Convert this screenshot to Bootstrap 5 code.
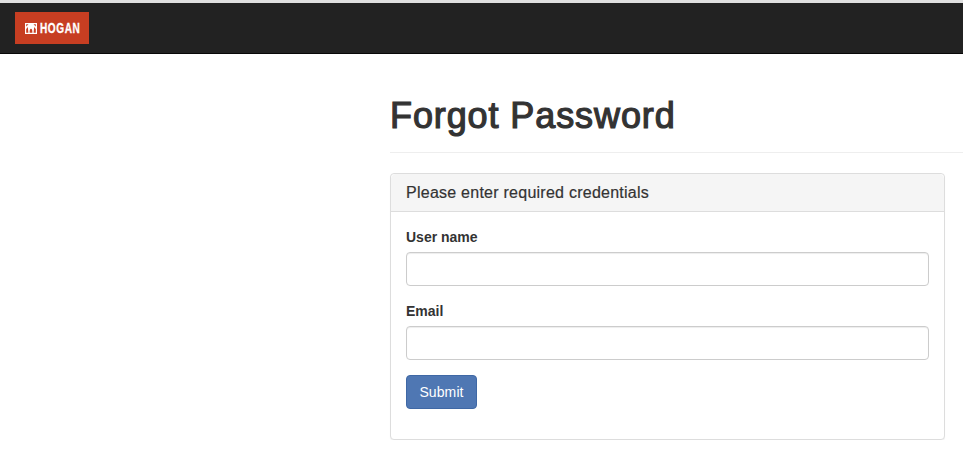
<!DOCTYPE html>
<html lang="en">
<head>
    <meta charset="UTF-8">
    <meta name="viewport" content="width=device-width, initial-scale=1.0">
    <title>Forgot Password</title>
    <link href="https://cdn.jsdelivr.net/npm/bootstrap@5.3.3/dist/css/bootstrap.min.css" rel="stylesheet">
    <style>
        body {
            font-family: "Liberation Sans", Arial, sans-serif;
            font-size: 14px;
            color: #333;
            background: #fff;
            overflow: hidden;
        }
        .top-bar {
            height: 54px;
            padding: 9px 15px 0;
            background: #222;
            border-top: 3px solid #e0e0e0;
            border-bottom: 1px solid #080808;
            align-items: flex-start;
        }
        .logo-box {
            width: 74px;
            height: 32px;
            background: #c73e22;
            gap: 3px;
            padding-left: 10px;
            overflow: hidden;
        }
        .logo-text {
            display: inline-block;
            color: #fff;
            font-weight: 700;
            font-size: 14px;
            letter-spacing: .8px;
            -webkit-text-stroke: .3px #fff;
            line-height: 1;
            transform: scaleX(.72);
            transform-origin: left center;
        }
        .page-wrap {
            margin-left: 390px;
        }
        .page-head {
            padding: 40px 0 15px;
            margin-bottom: 20px;
            border-bottom: 1px solid #eee;
        }
        .page-head h1 {
            font-size: 36px;
            font-weight: 400;
            letter-spacing: .9px;
            -webkit-text-stroke: 1.2px #333;
            line-height: 43px;
            margin: 0;
            color: #333;
        }
        .form-panel {
            width: 555px;
            height: 267px;
            border-color: #ddd;
            border-radius: 4px;
            box-shadow: 0 1px 1px rgba(0, 0, 0, .05);
        }
        .form-panel .card-header {
            height: 38px;
            padding: 10px 15px;
            font-size: 16px;
            letter-spacing: .25px;
            -webkit-text-stroke: .2px #333;
            line-height: 18px;
            color: #333;
            background: #f5f5f5;
            border-color: #ddd;
        }
        .form-panel .card-body {
            padding: 15px;
        }
        .form-panel .form-label {
            font-weight: 700;
            line-height: 20px;
            margin-bottom: 5px;
            color: #333;
        }
        .form-panel .form-control {
            height: 34px;
            border-color: #ccc;
            border-radius: 4px;
            box-shadow: inset 0 1px 1px rgba(0, 0, 0, .075);
        }
        .field-row {
            margin-bottom: 15px;
        }
        .submit-btn {
            width: 71px;
            height: 34px;
            padding: 6px 0;
            font-size: 14px;
            letter-spacing: .1px;
            line-height: 20px;
            color: #fff;
            background: #4f77b3;
            border: 1px solid #3f68a5;
            border-radius: 4px;
        }
    </style>
</head>
<body>
    <nav class="top-bar d-flex">
        <a class="logo-box d-flex align-items-center text-decoration-none" href="#">
            <svg class="flex-shrink-0" width="12" height="11" viewBox="0 0 12 11" aria-hidden="true">
                <path fill="#fff" d="M0 0h12v11H0z"/>
                <path fill="#c73e22" d="M1.200 1.200h2.300L1.200 3.600zM10.800 1.200H8.500l2.300 2.400zM1.200 6c.7-.6 1.300-1.400 1.600-2.200L3.400 9.800H1.200zM10.800 6c-.7-.6-1.300-1.400-1.600-2.200L8.600 9.800h2.200zM4.600 9.800c0-2.400.5-4 1.400-4s1.400 1.600 1.400 4z"/>
            </svg>
            <span class="logo-text flex-shrink-0">HOGAN</span>
        </a>
    </nav>
    <main class="page-wrap">
        <div class="page-head">
            <h1>Forgot Password</h1>
        </div>
        <div class="card form-panel">
            <div class="card-header">Please enter required credentials</div>
            <div class="card-body">
                <form>
                    <div class="field-row">
                        <label class="form-label" for="userName">User name</label>
                        <input class="form-control" id="userName" type="text">
                    </div>
                    <div class="field-row">
                        <label class="form-label" for="email">Email</label>
                        <input class="form-control" id="email" type="email">
                    </div>
                    <button class="btn submit-btn" type="button">Submit</button>
                </form>
            </div>
        </div>
    </main>
    <script src="https://cdn.jsdelivr.net/npm/bootstrap@5.3.3/dist/js/bootstrap.bundle.min.js"></script>
</body>
</html>
